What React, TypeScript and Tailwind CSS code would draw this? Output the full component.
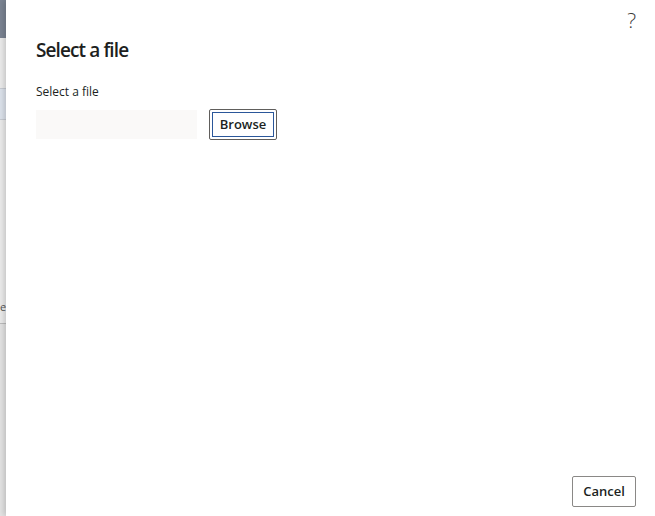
import React from "react";

export default function App() {
  return (
    <div
      className="flex h-[516px] w-[655px] overflow-hidden bg-white"
      style={{ fontFamily: '"Open Sans", "Noto Sans", sans-serif' }}
    >
      {/* background page sliver */}
      <div className="flex w-[6px] shrink-0 flex-col bg-[#e6e6e6]">
        <div className="h-[38px] bg-[#7b8493]" />
        <div className="h-[50px] bg-[#ececec]" />
        <div className="h-[32px] border-y border-[#c8ccd3] bg-[#dde3ec]" />
        <div className="h-[180px] bg-[#ececec]" />
        <div className="h-[14px] bg-[#ececec] text-[11px] leading-[14px] text-[#555]">el</div>
        <div className="h-[10px] border-b border-[#bdbdbd] bg-[#ececec]" />
        <div className="flex-1 bg-[#e4e4e4]" />
      </div>

      {/* dialog */}
      <div className="relative flex flex-1 flex-col bg-white shadow-[-2px_0_6px_rgba(0,0,0,0.18)]">
        <div className="absolute right-[19px] top-[8px] text-[21px] font-light leading-[24px] text-[#3b3a39]">
          ?
        </div>
        <div className="px-[30px] pt-[36px]">
          <h1 className="text-[19px] font-semibold leading-[28px] tracking-[-0.9px] text-[#201f1e]">Select a file</h1>
          <div className="mt-[20px] text-[12px] leading-[16px] text-[#201f1e]">Select a file</div>
          <div className="mt-[9px] flex items-center gap-[12px]">
            <div className="h-[29px] w-[161px] bg-[#faf9f8]" />
            <button className="flex h-[31px] w-[68px] items-center justify-center rounded-[2px] border border-[#605e5c] bg-white p-[2px]">
              <span className="flex h-full w-full items-center justify-center border border-[#2b579a] text-[13px] font-semibold text-[#201f1e]">
                Browse
              </span>
            </button>
          </div>
        </div>
        <div className="flex-1" />
        <div className="flex justify-end pb-[9px] pr-[19px]">
          <button className="flex h-[31px] w-[64px] items-center justify-center rounded-[2px] border border-[#8a8886] bg-white text-[13px] font-semibold text-[#201f1e]">
            Cancel
          </button>
        </div>
      </div>
    </div>
  );
}
